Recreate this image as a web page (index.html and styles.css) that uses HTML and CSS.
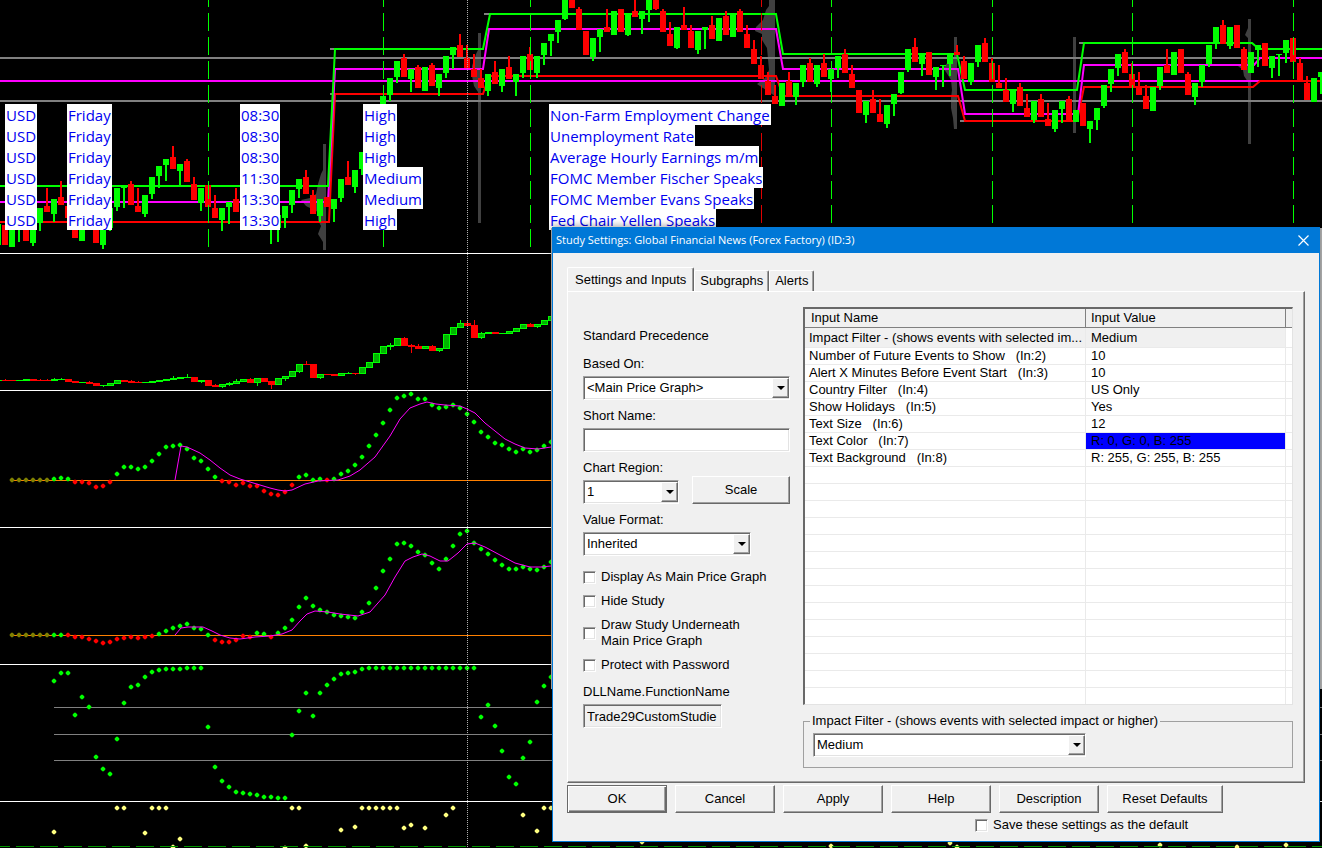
FILE: index.html
```
<!DOCTYPE html>
<html lang="en">
<head>
    <meta charset="UTF-8">
    <meta name="viewport" content="width=device-width, initial-scale=1.0">
    <title>Study Settings</title>
    <link rel="stylesheet" href="styles.css">
</head>
<body>
    <svg class="chart" id="chart" aria-label="Price chart"></svg>

    <table class="news">
        <tr><td><span>USD</span></td><td><span>Friday</span></td><td><span>08:30</span></td><td><span>High</span></td><td><span>Non-Farm Employment Change</span></td></tr>
        <tr><td><span>USD</span></td><td><span>Friday</span></td><td><span>08:30</span></td><td><span>High</span></td><td><span>Unemployment Rate</span></td></tr>
        <tr><td><span>USD</span></td><td><span>Friday</span></td><td><span>08:30</span></td><td><span>High</span></td><td><span>Average Hourly Earnings m/m</span></td></tr>
        <tr><td><span>USD</span></td><td><span>Friday</span></td><td><span>11:30</span></td><td><span>Medium</span></td><td><span>FOMC Member Fischer Speaks</span></td></tr>
        <tr><td><span>USD</span></td><td><span>Friday</span></td><td><span>13:30</span></td><td><span>Medium</span></td><td><span>FOMC Member Evans Speaks</span></td></tr>
        <tr><td><span>USD</span></td><td><span>Friday</span></td><td><span>13:30</span></td><td><span>High</span></td><td><span>Fed Chair Yellen Speaks</span></td></tr>
    </table>

    <div class="side-strip"></div>

    <form class="dialog" onsubmit="return false">
        <div class="titlebar">
            <span>Study Settings: Global Financial News (Forex Factory) (ID:3)</span>
            <button type="button" class="close" aria-label="Close">
                <svg width="11" height="11" viewBox="0 0 11 11"><path d="M0.5 0.5L10.5 10.5M10.5 0.5L0.5 10.5" stroke="#fff" stroke-width="1.2"/></svg>
            </button>
        </div>

        <div class="content">
            <div class="tabs">
                <button type="button" class="tab active">Settings and Inputs</button>
                <button type="button" class="tab">Subgraphs</button>
                <button type="button" class="tab">Alerts</button>
            </div>

            <div class="pane">
                <div class="left">
                    <p class="precedence">Standard Precedence</p>

                    <label for="basedOn">Based On:</label>
                    <div class="combo">
                        <select id="basedOn"><option>&lt;Main Price Graph&gt;</option></select>
                    </div>

                    <label for="shortName">Short Name:</label>
                    <input type="text" id="shortName" class="text">

                    <label for="region">Chart Region:</label>
                    <div class="region-row">
                        <div class="combo region">
                            <select id="region"><option>1</option></select>
                        </div>
                        <button type="button" class="btn">Scale</button>
                    </div>

                    <label for="format">Value Format:</label>
                    <div class="combo format">
                        <select id="format"><option>Inherited</option></select>
                    </div>

                    <div class="checks">
                        <label class="check"><input type="checkbox"><span>Display As Main Price Graph</span></label>
                        <label class="check"><input type="checkbox"><span>Hide Study</span></label>
                        <label class="check"><input type="checkbox"><span>Draw Study Underneath<br>Main Price Graph</span></label>
                        <label class="check"><input type="checkbox"><span>Protect with Password</span></label>
                    </div>

                    <label for="dll">DLLName.FunctionName</label>
                    <input type="text" id="dll" class="text dll" value="Trade29CustomStudie" readonly>
                </div>

                <div class="right">
                    <div class="list">
                        <table>
                            <thead>
                                <tr><th class="name">Input Name</th><th class="value">Input Value</th><th></th></tr>
                            </thead>
                            <tbody id="inputs">
                                <tr class="selected"><td>Impact Filter - (shows events with selected im...</td><td>Medium</td><td></td></tr>
                                <tr><td>Number of Future Events to Show &nbsp; (In:2)</td><td>10</td><td></td></tr>
                                <tr><td>Alert X Minutes Before Event Start &nbsp; (In:3)</td><td>10</td><td></td></tr>
                                <tr><td>Country Filter &nbsp; (In:4)</td><td>US Only</td><td></td></tr>
                                <tr><td>Show Holidays &nbsp; (In:5)</td><td>Yes</td><td></td></tr>
                                <tr><td>Text Size &nbsp; (In:6)</td><td>12</td><td></td></tr>
                                <tr><td>Text Color &nbsp; (In:7)</td><td class="blue">R: 0, G: 0, B: 255</td><td></td></tr>
                                <tr><td>Text Background &nbsp; (In:8)</td><td>R: 255, G: 255, B: 255</td><td></td></tr>
                            </tbody>
                        </table>
                    </div>

                    <fieldset>
                        <legend><label for="impact">Impact Filter - (shows events with selected impact or higher)</label></legend>
                        <div class="combo impact">
                            <select id="impact"><option>Medium</option></select>
                        </div>
                    </fieldset>
                </div>
            </div>

            <div class="buttons">
                <button type="button" class="btn default">OK</button>
                <button type="button" class="btn">Cancel</button>
                <button type="button" class="btn">Apply</button>
                <button type="button" class="btn">Help</button>
                <button type="button" class="btn">Description</button>
                <button type="button" class="btn wide">Reset Defaults</button>
            </div>
            <label class="check save"><input type="checkbox"><span>Save these settings as the default</span></label>
        </div>
    </form>

    <script src="script.js"></script>
</body>
</html>
```
FILE: styles.css
```
*, *::before, *::after {
    box-sizing: border-box;
}
body {
    margin: 0;
    min-height: 100vh;
    position: relative;
    overflow: hidden;
    background: #000;
    color: #000;
    font-family: "Liberation Sans", Arial, sans-serif;
    font-size: 13px;
    line-height: 16px;
}
.chart {
    display: block;
    width: 100%;
    height: 100vh;
    min-height: 848px;
}
button, input, select {
    font: inherit;
    color: inherit;
}

/* news overlay on the chart */
.news {
    position: absolute;
    left: 5px;
    top: 104px;
    border-collapse: collapse;
    table-layout: fixed;
    width: 800px;
    font-family: "Open Sans", "Noto Sans", sans-serif;
    font-size: 15px;
    line-height: 21px;
    color: #0000f0;
    white-space: nowrap;
}
.news td {
    padding: 0;
    height: 21px;
}
.news td:nth-child(1) { width: 62px; }
.news td:nth-child(2) { width: 173px; }
.news td:nth-child(3) { width: 123px; }
.news td:nth-child(4) { width: 186px; }
.news span {
    display: block;
    width: max-content;
    height: 21px;
    padding: 1px 1px 0;
    background: #fff;
}

/* window behind the dialog */
.side-strip {
    position: absolute;
    top: 228px;
    left: 551px;
    right: 0;
    height: 461px;
    background: #b4b4b4;
}

/* dialog */
.dialog {
    position: absolute;
    top: 227px;
    left: 552px;
    right: 2px;
    background: #f0f0f0;
    border: 1px solid #0078d7;
    border-top: 0;
    box-shadow: 0 -2px 6px rgba(0, 0, 0, 0.3);
}
.titlebar {
    display: flex;
    justify-content: space-between;
    align-items: center;
    height: 26px;
    padding: 0 10px 0 3px;
    background: #0078d7;
    color: #fff;
    font-family: "Open Sans", "Noto Sans", sans-serif;
    font-size: 11px;
}
.close {
    display: flex;
    padding: 0;
    border: 0;
    background: none;
}
.content {
    padding: 14px 14px 8px;
}
.tabs {
    display: flex;
    align-items: flex-end;
    height: 24px;
}
.tab {
    height: 21px;
    padding: 0 5px;
    border: 1px solid #fff;
    border-right-color: #696969;
    border-bottom: 0;
    border-radius: 2px 2px 0 0;
    background: #f0f0f0;
    box-shadow: inset -1px 0 #a0a0a0;
}
.tab.active {
    height: 24px;
    padding: 0 7px;
    position: relative;
    z-index: 1;
}
.pane {
    display: grid;
    grid-template-columns: 207px 1fr;
    gap: 13px;
    height: 492px;
    padding: 15px 11px 14px 15px;
    border: 1px solid #fff;
    border-right-color: #696969;
    border-bottom-color: #696969;
    box-shadow: inset -1px -1px #a0a0a0;
}

.left > label {
    display: block;
    margin: 8px 0 4px;
}
.precedence {
    margin: 21px 0 12px;
}
.combo {
    position: relative;
    height: 24px;
}
.combo select, .text {
    display: block;
    width: 100%;
    height: 24px;
    padding: 0 3px;
    border: 1px solid #a0a0a0;
    border-right-color: #fff;
    border-bottom-color: #fff;
    border-radius: 0;
    background: #fff;
    box-shadow: inset 1px 1px #696969, inset -1px -1px #e3e3e3;
    appearance: none;
    outline: 0;
}
.combo::after {
    content: "";
    position: absolute;
    top: 2px;
    right: 1px;
    width: 17px;
    height: 20px;
    background: #f0f0f0;
    border: 1px solid #fff;
    border-right-color: #696969;
    border-bottom-color: #696969;
    box-shadow: inset -1px -1px #a0a0a0;
    pointer-events: none;
}
.combo::before {
    content: "";
    position: absolute;
    top: 10px;
    right: 5px;
    z-index: 1;
    border: 4px solid transparent;
    border-top-color: #000;
    border-bottom: 0;
    pointer-events: none;
}
.region {
    width: 96px;
}
.format {
    width: 168px;
}
.region-row {
    display: flex;
    justify-content: space-between;
    align-items: flex-end;
    height: 24px;
}
.region-row .btn {
    width: 98px;
}
.text.dll {
    width: 139px;
    background: #f0f0f0;
}

.checks {
    display: grid;
    gap: 8px;
    margin: 13px 0 11px;
}
.check {
    display: flex;
    align-items: center;
    gap: 5px;
}
.check input {
    appearance: none;
    width: 13px;
    height: 13px;
    margin: 0;
    background: #fff;
    border: 1px solid #a0a0a0;
    border-right-color: #fff;
    border-bottom-color: #fff;
    box-shadow: inset 1px 1px #696969, inset -1px -1px #e3e3e3;
}

.btn {
    width: 100px;
    height: 28px;
    padding: 0;
    background: #f0f0f0;
    border: 1px solid #fff;
    border-right-color: #696969;
    border-bottom-color: #696969;
    border-radius: 0;
    box-shadow: inset -1px -1px #a0a0a0;
}
.btn.default {
    border-color: #696969;
    box-shadow: inset 1px 1px #fff, inset -1px -1px #696969, inset -2px -2px #a0a0a0;
}
.btn.wide {
    width: 116px;
}
.buttons {
    display: flex;
    gap: 8px;
    padding-top: 2px;
}
.save {
    width: max-content;
    margin: 4px 0 0 408px;
}

/* inputs list */
.right {
    min-width: 0;
}
.list {
    height: 398px;
    background: #fff;
    border: 2px solid #696969;
    border-right: 1px solid #e3e3e3;
    border-bottom: 1px solid #e3e3e3;
    overflow: hidden;
}
.list table {
    width: 100%;
    border-collapse: separate;
    border-spacing: 0;
    table-layout: fixed;
}
.list th {
    height: 19px;
    padding: 0 6px;
    background: #f0f0f0;
    border-right: 1px solid #808080;
    border-bottom: 1px solid #808080;
    font-weight: normal;
    text-align: left;
}
.list th + th {
    padding-left: 5px;
}
.list th.name {
    width: 281px;
}
.list th.value {
    width: 200px;
}
.list th:last-child, .list td:last-child {
    border-right: 0;
    padding: 0;
}
.list td {
    height: 17px;
    padding: 0 0 0 4px;
    line-height: 16px;
    border-right: 1px solid #eaeaea;
    border-bottom: 1px solid #eaeaea;
    white-space: nowrap;
}
.list td + td {
    padding-left: 5px;
}
.list tbody tr:first-child td {
    height: 20px;
    line-height: 19px;
}
.list .selected td {
    background: #f0f0f0;
}
.list .selected td:last-child {
    background: #fff;
}
.list .blue {
    background: #00f;
}

fieldset {
    height: 55px;
    margin: 8px 0 0;
    padding: 4px 9px 0;
    border: 1px solid #a0a0a0;
}
legend {
    padding: 0 2px;
    margin-left: -3px;
}
.impact {
    width: 273px;
}
```
FILE: script.js
```
const svg = document.getElementById("chart");
const LIME = "#00ff00";
const RED = "#ff0000";

function add(tag, attrs) {
    const el = document.createElementNS("http://www.w3.org/2000/svg", tag);
    for (const key in attrs) el.setAttribute(key, attrs[key]);
    svg.appendChild(el);
}

function rect(x, y, width, height, fill) {
    add("rect", { x, y, width, height, fill });
}

function hline(y, color, height, x) {
    add("rect", { x: x || 0, y, width: "100%", height, fill: color });
}

function poly(points, color, width) {
    add("polyline", { points, fill: "none", stroke: color, "stroke-width": width });
}

// bars sit 7px apart
function barX(i) {
    return 5 + 7 * i;
}

// price region: session lines
function sessionLine(x, color) {
    add("line", { x1: x + 0.5, x2: x + 0.5, y1: 0, y2: 250, stroke: color, "stroke-dasharray": "18 6", "stroke-dashoffset": 11 });
}

// volume profiles
[
    "323,144 326,144 326,250 323,250 323,242 318,234 321,226 318,220 318,212 306,206 301,200 310,198 316,194 318,184 321,174 323,170",
    "478,33 481,33 481,223 478,223 478,92 474,86 472,76 472,66 476,54 478,50",
    "769,0 775,0 775,96 769,92 757,84 765,78 769,70 767,48 762,40 762,34 755,31 756,27 763,20 766,10 769,6",
    "954,37 957,37 957,129 954,129 953,118 951,108 951,98 952,90 951,80 946,72 943,68 948,62 954,58",
    "1073,37 1076,37 1076,133 1073,133",
    "1248,19 1251,19 1251,144 1248,144 1248,82 1244,76 1243,70 1238,66 1246,64 1248,58 1248,38 1245,35 1248,28"
].forEach(points => add("polygon", { points, fill: "#404040" }));

hline(57, "#808080", 2);
hline(80, "#ff00ff", 2);
hline(100, "#808080", 2);

poly("330,49 335,49", "#808080", 2);
poly("330,94 335,94", "#808080", 2);
poly("484,14 490,14", "#808080", 2);
poly("960,121 966,121", "#808080", 2);
poly("1079,43 1085,43", "#808080", 2);
poly("0,222 329,222 335,94 483,94 489,76 776,76 783,96 958,96 965,121 1077,121 1084,87 1253,87 1260,81 1322,81", RED, 2);
poly("0,202 328,202 335,69 483,69 489,29 776,29 783,69 958,69 965,114 1078,114 1084,65 1254,65 1260,58 1322,58", "#ff00ff", 2);
poly("0,186 328,186 335,49 483,49 490,14 776,14 783,54 957,54 965,90 1077,90 1084,43 1252,43 1259,49 1322,49", LIME, 2);

// price candles: index, direction, high, body top, body bottom, low
const price = `
-1 g 224 224 245 245|0 r 225 225 245 245|1 g 227 227 247 247|2 g 225 225 226 242|3 r 220 220 241 241|4 g 218 218 243 246
5 g 208 208 223 231|6 r 188 206 212 212|7 g 199 199 214 222|8 r 181 197 205 205|9 r 206 206 218 218|10 r 210 220 238 238
11 g 218 218 241 241|12 r 210 215 225 230|13 r 215 220 243 243|14 g 215 215 245 249|15 g 208 208 228 231|16 g 188 188 207 211
17 g 187 187 188 208|18 r 181 184 205 205|19 r 188 206 212 212|20 g 195 195 214 217|21 g 177 177 194 199|22 g 166 166 176 188
23 g 159 159 165 181|24 r 146 157 169 169|25 g 164 164 171 185|26 r 159 161 182 182|27 r 177 184 200 200|28 g 188 188 203 211
29 r 185 185 207 207|30 r 195 208 218 218|31 g 208 208 220 231|32 g 202 202 207 224|33 r 188 199 212 212|38 g 215 215 228 244
39 g 215 215 228 242|40 g 206 206 218 228|41 g 190 190 205 213|42 g 179 179 189 198|43 r 170 177 194 194|44 r 190 195 214 214
45 g 199 199 216 222|46 r 197 197 207 207|47 g 199 199 209 222|48 g 179 179 198 202|49 r 161 177 185 185|50 g 170 170 187 193
51 g 152 152 169 175|54 g 96 96 106 108|55 g 78 78 95 101|56 g 61 61 77 83|57 r 54 58 77 77|58 g 69 69 79 92
59 r 65 67 88 88|60 g 67 67 91 91|61 r 63 65 86 86|62 g 74 74 88 96|63 g 56 56 73 78|64 g 47 47 55 69
65 r 34 45 57 57|66 r 45 58 68 68|67 r 54 69 77 77|68 r 69 78 88 88|69 g 74 74 91 96|70 r 61 72 84 84
71 g 69 69 86 92|72 r 56 67 79 79|73 g 74 74 82 96|74 g 56 56 73 78|75 r 47 54 70 70|76 g 56 56 73 78
77 g 43 43 55 65|78 g 34 34 41 56|79 g 20 20 32 43|80 g 0 0 19 20|81 r 0 0 8 8|82 r 7 9 30 30
83 r 31 31 55 55|84 g 38 38 57 61|85 g 29 29 37 52|86 r 9 27 32 32|87 g 11 11 35 35|88 r 9 9 32 32
89 g 14 14 35 36|90 r 0 11 17 17|91 g 11 11 19 34|92 g 0 0 10 22|93 r 0 0 9 10|94 r 9 11 32 32
95 r 22 34 46 46|96 g 27 27 48 49|97 r 7 25 30 30|98 r 25 31 48 48|99 g 31 31 50 54|100 g 27 27 30 49
101 r 16 25 39 39|102 g 18 18 41 41|103 r 11 16 35 35|104 g 14 14 37 37|105 r 9 11 32 32|106 r 25 34 48 48
107 r 40 49 64 64|108 r 56 65 79 79|109 r 72 81 95 95|110 r 85 96 104 104|111 g 83 83 106 106|112 r 72 81 97 97
113 g 83 83 97 105|114 g 65 65 82 87|115 r 58 63 82 82|116 g 65 65 84 87|117 r 54 63 77 77|118 g 69 69 79 92
119 g 56 56 68 78|120 r 49 54 73 73|121 r 65 74 88 88|122 r 90 90 113 113|123 g 101 101 115 123|124 r 90 99 113 113
125 r 99 114 122 122|126 g 105 105 124 128|127 g 94 94 104 116|128 g 72 72 93 94|129 g 49 49 70 72|130 r 38 47 62 62
131 g 54 54 64 76|132 r 52 52 75 75|133 g 67 67 77 90|134 g 65 65 66 87|135 g 54 54 64 76|136 r 45 52 55 55
137 r 56 61 79 79|138 g 63 63 82 85|139 g 45 45 62 67|140 r 38 43 62 62|141 r 58 63 82 82|142 r 65 83 88 88
143 r 78 90 102 102|144 g 90 90 104 112|145 r 83 87 106 106|146 r 94 108 117 117|147 g 101 101 120 123|148 r 94 99 117 117
149 r 103 119 126 126|150 g 110 110 129 132|151 g 101 101 109 123|152 r 96 99 120 120|153 g 110 110 122 122|154 r 103 103 126 126
155 g 121 121 129 143|156 g 108 108 120 130|157 g 85 85 106 108|158 g 69 69 84 92|159 g 54 54 68 76|160 r 49 52 73 73
161 r 63 74 87 87|162 r 72 86 95 95|163 r 85 96 109 109|164 g 87 87 111 111|165 g 67 67 86 90|166 r 49 65 73 73
167 g 52 52 75 75|168 r 49 49 73 73|169 r 72 74 95 95|170 g 83 83 97 105|171 g 65 65 82 87|172 g 45 45 64 67
173 g 27 27 44 49|174 r 20 25 44 44|175 g 27 27 46 49|176 r 25 25 48 48|177 r 47 49 70 70|178 g 52 52 73 73
179 g 45 45 50 67|180 r 43 43 66 66|181 g 56 56 68 78|182 g 54 54 55 76|183 g 40 40 53 63|184 r 38 38 62 62
185 r 58 63 81 81|186 r 76 83 100 100|187 g 78 78 102 102|188 g 72 72 77 94`;

price.trim().split(/[|\n]/).forEach(row => {
    const [i, dir, high, top, bottom, low] = row.split(" ");
    const color = dir === "g" ? LIME : RED;
    rect(barX(+i) - 1, +high, 2, low - high, color);
    rect(barX(+i) - 3, +top, 6, bottom - top, color);
});

[208, 383, 530, 831, 992, 1132, 1293].forEach(x => sessionLine(x, LIME));
sessionLine(761, "#e00000");

// second region: smoothed bars
const smooth = `
-1 g 380 380 381 381|0 r 379 380 381 381|1 r 380 380 381 381|2 g 380 380 381 381|3 g 379 379 381 381|4 r 379 379 381 381
5 r 379 380 381 381|6 r 379 380 381 381|7 g 378 379 381 381|8 g 378 379 380 380|9 r 379 379 382 382|10 r 381 381 383 383
11 g 382 382 383 383|12 r 381 382 384 384|13 r 383 383 386 386|14 g 385 385 386 387|15 g 383 383 386 386|16 g 380 380 384 384
17 r 380 380 382 382|18 r 380 381 383 383|19 r 381 382 383 383|20 g 382 382 383 383|21 g 381 381 383 383|22 g 380 380 382 382
23 g 379 379 381 381|24 g 376 378 380 380|25 g 377 377 379 379|26 g 374 377 378 378|27 r 377 377 382 382|28 g 380 380 382 383
29 r 380 380 386 386|30 r 384 385 387 387|31 g 384 384 387 388|32 g 382 383 385 386|33 g 379 381 384 384|34 g 379 379 382 382
35 r 378 379 383 383|36 g 378 378 383 386|37 r 378 378 382 382|38 r 381 381 385 389|39 g 378 378 385 385|40 g 376 376 379 381
41 g 371 371 377 377|42 g 364 364 372 373|43 r 361 364 365 365|44 r 364 364 378 378|45 g 374 374 378 379|46 r 374 374 375 375
47 r 374 374 376 376|48 g 373 373 376 376|49 g 372 373 374 374|50 r 373 373 374 375|51 g 367 367 374 374|52 g 362 362 368 368
53 g 353 353 363 363|54 g 346 346 354 354|55 g 343 345 347 350|56 g 338 338 346 346|57 r 337 338 346 346|58 r 344 345 347 353
59 r 344 346 349 349|60 g 346 346 349 349|61 r 345 346 351 351|62 g 348 348 351 352|63 g 334 334 349 349|64 g 327 327 335 335
65 g 320 323 328 328|66 r 321 323 326 326|67 r 320 325 338 338|68 g 332 333 338 339|69 g 332 332 334 334|70 r 332 332 334 334
71 g 333 333 334 334|72 g 331 331 334 334|73 g 328 328 332 332|74 g 324 324 329 329|75 r 323 324 327 327|76 g 324 324 327 328
77 g 320 320 325 325|78 g 316 316 321 321`;

smooth.trim().split(/[|\n]/).forEach(row => {
    const [i, dir, high, top, bottom, low] = row.split(" ");
    const color = dir === "g" ? LIME : RED;
    rect(barX(+i), +high, 1, low - high, color);
    rect(barX(+i) - 3, +top, 7, bottom - top, color);
    if (dir === "g" && bottom - top > 2) rect(barX(+i) - 2, +top + 1, 5, bottom - top - 2, "#00b400");
});

function dot(i, y, color) {
    const x = barX(i);
    add("path", { d: `M${x - 1} ${y - 2}h2v1h1v2h-1v1h-2v-1h-1v-2h1z`, fill: color, stroke: color, "stroke-width": 0.5 });
}

// values start at bar `start`; a color letter switches the color
function dots(start, data) {
    const colors = { g: LIME, r: RED, o: "#808000", y: "#ffff80" };
    let color = LIME;
    let i = start;
    data.split(" ").forEach(v => {
        if (colors[v]) color = colors[v];
        else dot(i++, +v, color);
    });
}

add("rect", { x: 12, y: 480, width: 540, height: 1, fill: "#ff8000" });
dots(1, "o 480 480 480 480 480 480 g 479 478 479 r 482 482 483 487 486 482 g 474 467 467 469 467 461 454 447 446 445 449 458 461 469 477 r 481 482 485 483 486 486 491 494 495 492 485 g 477 475 480 479 r 480 g 479 474 471 465 457 446 435 423 410 398 396 394 399 399 405 408 407 405 408 414 422 432 437 443 445 449 452 449 452 450 446 442");
poly("175,480 181,446 187,447 200,453 210,460 220,468 230,475 240,479 250,482 260,485 270,488 278,490 285,491 292,490 305,484 318,481 338,480 350,476 360,470 375,457 390,436 400,419 410,408 420,404 427,402 436,404 445,405 460,406 467,409 475,413 485,423 495,431 505,439 515,444 525,448 538,449 551,447", "#ff00ff", 1);

add("rect", { x: 12, y: 635, width: 540, height: 1, fill: "#ff8000" });
dots(1, "o 635 635 635 635 635 635 g 635 635 r 635 637 637 639 641 643 642 639 638 637 638 637 636 g 634 631 628 626 624 628 629 635 r 640 642 642 640 636 637 g 633 634 r 637 g 633 628 620 607 598 606 610 612 615 616 617 618 612 603 588 571 559 544 543 546 552 555 563 569 559 546 534 531 543 549 554 560 565 569 569 567 569 570 567 562");
poly("175,635 181,628 188,627 203,627 212,631 220,635 230,638 240,639 255,637 270,636 282,634 292,630 300,621 307,614 315,611 328,612 340,614 358,616 370,612 385,595 395,577 405,561 413,557 422,554 430,556 440,561 448,561 458,553 467,544 475,543 485,547 500,555 515,563 530,567 541,567 551,566", "#ff00ff", 1);

hline(707, "#808080", 1, 54);
hline(734, "#808080", 1, 54);
hline(760, "#808080", 1, 54);
dots(7, "681 673 673 715 697 707 757 769 774 739 703 687 685 677 672 670 669 669 669 668 668 668 727 767 781 787 792 793 794 795 797 797 798 798 735 711 693 716 693 685 679 674 673 672 669 668 668 668 668 668 668 668 668 668 668 668 668 668 668 668 668 717 705 726 751 777 784 758 742 702 686 677");

[
    [7, 832], [16, 808], [17, 808], [20, 833], [21, 808], [22, 808], [23, 808], [24, 847], [25, 839], [40, 848],
    [41, 808], [42, 808], [43, 846], [48, 830], [50, 827], [51, 808], [52, 808], [53, 808], [54, 808], [55, 808],
    [56, 808], [57, 828], [58, 825], [60, 828], [63, 815], [64, 808], [74, 815], [76, 831], [77, 808], [78, 808],
    [91, 842], [118, 846], [135, 843], [136, 847], [165, 845], [176, 847], [183, 845]
].forEach(([i, y]) => dot(i, y, "#ffff80"));

add("line", { x1: 0, x2: "100%", y1: 846.5, y2: 846.5, stroke: "#009600", "stroke-dasharray": "18 6", "stroke-dashoffset": 8 });

// region separators
[253, 390, 527, 664, 801].forEach(y => hline(y, "#ffffff", 1));

// cursor line
add("line", { x1: 467.5, x2: 467.5, y1: 0, y2: "100%", stroke: "#b0b0b0", "stroke-dasharray": "1 1" });

// fill the rest of the inputs list with blank rows
const inputs = document.getElementById("inputs");
for (let i = 0; i < 14; i++) {
    const row = inputs.insertRow();
    for (let j = 0; j < 3; j++) row.insertCell();
}
```
